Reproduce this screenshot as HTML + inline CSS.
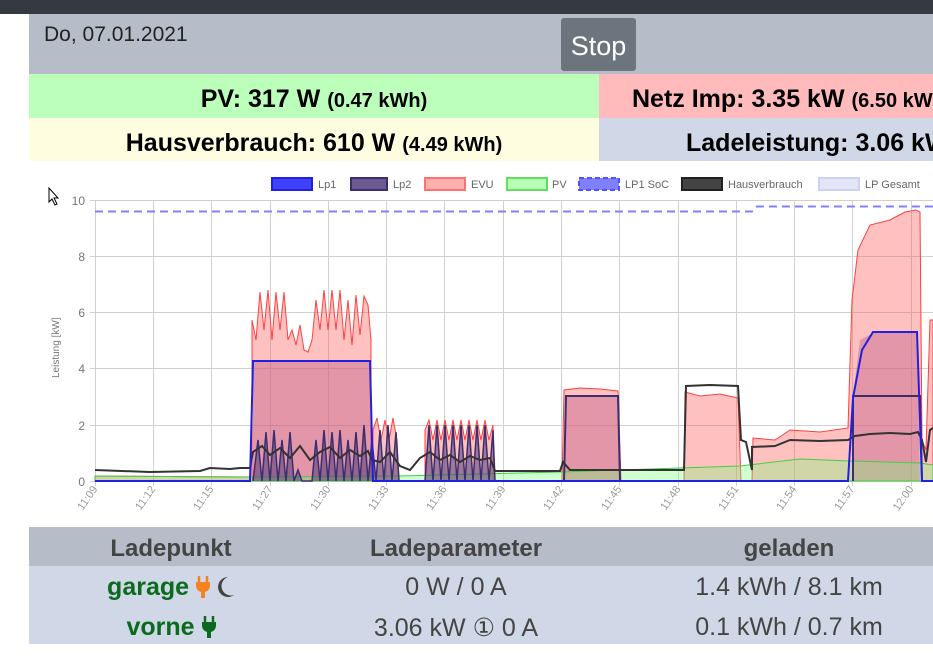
<!DOCTYPE html>
<html><head><meta charset="utf-8"><style>
body{margin:0;width:933px;height:658px;overflow:hidden;background:#fff;font-family:"Liberation Sans",sans-serif;position:relative}
.a{position:absolute}
.top{left:0;top:0;width:933px;height:14px;background:#343a40}
.hdr{left:29px;top:14px;width:904px;height:60px;background:#b7bcc9}
.date{left:44px;top:23px;font-size:21px;color:#222}
.stop{left:561px;top:18px;width:75px;height:53px;background:#6c757d;border-radius:3px;color:#fff;font-size:27px;text-align:center;line-height:56px}
.cell{height:44px;font-weight:bold;font-size:25px;line-height:50px;color:#000;white-space:nowrap;overflow:hidden}
.cell small{font-size:20px}
.th{font-weight:bold;font-size:24px;color:#444;text-align:center;width:300px}
.td{font-size:25px;color:#444;text-align:center;width:300px;white-space:nowrap}
.g{color:#0a6b1e;font-weight:bold}
</style></head><body>
<div class="a top"></div>
<div class="a hdr"></div>
<div class="a date">Do, 07.01.2021</div>
<div class="a stop">Stop</div>
<div class="a cell" style="left:29px;top:74px;width:570px;text-align:center;background:#bbffbb">PV: 317 W <small>(0.47 kWh)</small></div>
<div class="a cell" style="left:599px;top:74px;width:301px;padding-left:33px;background:#ffbbbb">Netz Imp: 3.35 kW <small>(6.50 kWh)</small></div>
<div class="a cell" style="left:29px;top:118px;width:570px;height:43px;text-align:center;background:#fffde0">Hausverbrauch: 610 W <small>(4.49 kWh)</small></div>
<div class="a cell" style="left:599px;top:118px;width:247px;padding-left:87px;height:43px;background:#d0d7e6">Ladeleistung: 3.06 kW</div>

<svg class="a" style="left:0;top:0" width="933" height="525" font-family="Liberation Sans, sans-serif">
<g font-size="11" fill="#666">
<rect x="272" y="178" width="40" height="12" fill="#4040ff" stroke="#2020e0" stroke-width="2"/><text x="318" y="188">Lp1</text>
<rect x="351" y="178" width="36" height="12" fill="#6a5a90" stroke="#3a2e70" stroke-width="2"/><text x="393" y="188">Lp2</text>
<rect x="425" y="178" width="40" height="12" fill="#ffb0b0" stroke="#ff7070" stroke-width="2"/><text x="471" y="188">EVU</text>
<rect x="507" y="178" width="40" height="12" fill="#b8ffb8" stroke="#60e060" stroke-width="2"/><text x="552" y="188">PV</text>
<rect x="579" y="178" width="40" height="12" fill="#8080ff" stroke="#5050ff" stroke-width="2" stroke-dasharray="5,3"/><text x="625" y="188">LP1 SoC</text>
<rect x="682" y="178" width="40" height="12" fill="#444" stroke="#222" stroke-width="2"/><text x="728" y="188">Hausverbrauch</text>
<rect x="819" y="178" width="40" height="12" fill="#e4e4f8" stroke="#d0d0f0" stroke-width="2"/><text x="865" y="188">LP Gesamt</text>
</g>
<g stroke="#d0d0d0" stroke-width="1">
<line x1="90" y1="200.5" x2="933" y2="200.5"/><line x1="90" y1="256.5" x2="933" y2="256.5"/><line x1="90" y1="312.5" x2="933" y2="312.5"/><line x1="90" y1="368.5" x2="933" y2="368.5"/><line x1="90" y1="425.5" x2="933" y2="425.5"/><line x1="90" y1="481.5" x2="933" y2="481.5"/>
<line x1="95.5" y1="200" x2="95.5" y2="486"/><line x1="153.5" y1="200" x2="153.5" y2="486"/><line x1="211.5" y1="200" x2="211.5" y2="486"/><line x1="270.5" y1="200" x2="270.5" y2="486"/><line x1="328.5" y1="200" x2="328.5" y2="486"/><line x1="386.5" y1="200" x2="386.5" y2="486"/><line x1="444.5" y1="200" x2="444.5" y2="486"/><line x1="503.5" y1="200" x2="503.5" y2="486"/><line x1="561.5" y1="200" x2="561.5" y2="486"/><line x1="619.5" y1="200" x2="619.5" y2="486"/><line x1="678.5" y1="200" x2="678.5" y2="486"/><line x1="736.5" y1="200" x2="736.5" y2="486"/><line x1="794.5" y1="200" x2="794.5" y2="486"/><line x1="852.5" y1="200" x2="852.5" y2="486"/><line x1="911.5" y1="200" x2="911.5" y2="486"/>
</g>
<g font-size="12" fill="#777" text-anchor="end">
<text x="85" y="205">10</text><text x="85" y="261">8</text><text x="85" y="317">6</text><text x="85" y="373">4</text><text x="85" y="430">2</text><text x="85" y="486">0</text>
</g>
<text transform="translate(59,378) rotate(-90)" font-size="10" fill="#777">Leistung [kW]</text>
<g font-size="11" fill="#999" text-anchor="end">
<text transform="translate(98,489) rotate(-55)">11:09</text><text transform="translate(156,489) rotate(-55)">11:12</text><text transform="translate(214,489) rotate(-55)">11:15</text><text transform="translate(273,489) rotate(-55)">11:27</text><text transform="translate(331,489) rotate(-55)">11:30</text><text transform="translate(389,489) rotate(-55)">11:33</text><text transform="translate(447,489) rotate(-55)">11:36</text><text transform="translate(506,489) rotate(-55)">11:39</text><text transform="translate(564,489) rotate(-55)">11:42</text><text transform="translate(622,489) rotate(-55)">11:45</text><text transform="translate(681,489) rotate(-55)">11:48</text><text transform="translate(739,489) rotate(-55)">11:51</text><text transform="translate(797,489) rotate(-55)">11:54</text><text transform="translate(855,489) rotate(-55)">11:57</text><text transform="translate(914,489) rotate(-55)">12:00</text>
</g>
<g fill="rgba(255,90,90,0.38)" stroke="#ff4040" stroke-width="1">
<path d="M95,476 L250,477 L250,481 L95,481Z"/>
<path d="M252,481 L252,320 256,340 260,292 264,330 268,290 272,340 276,292 280,330 284,292 288,340 292,330 296,345 300,325 304,350 308,352 312,340 316,300 320,330 324,290 328,330 332,290 336,330 340,290 344,340 348,300 352,345 356,295 360,335 364,296 368,305 371,340 371,481Z"/>
<path d="M373,481 L373,430 377,418 381,440 385,420 389,440 393,418 397,440 399,481Z"/>
<path d="M425,481 L425,430 429,420 433,440 437,420 441,440 445,420 449,440 453,420 457,440 461,420 465,440 469,420 473,440 477,420 481,440 485,420 489,440 493,425 494,481Z"/>
<path d="M562,481 L564,390 580,388 600,389 618,391 621,481Z"/>
<path d="M684,481 L685,392 700,396 720,394 738,398 741,481Z"/>
<path d="M752,481 L753,438 775,440 790,430 820,432 848,428 L852,300 858,250 870,225 890,220 905,212 916,210 920,212 922,440 926,450 930,320 933,320 933,481Z"/>
</g>
<g fill="rgba(190,100,140,0.45)">
<path d="M253,481 L253,361 370,361 372,481Z"/>
<path d="M564,481 L566,396 618,396 620,481Z"/>
<path d="M853,481 L853,395 860,340 875,332 917,332 920,481Z"/>
</g>
<path d="M95,476 L250,477 L400,476 L560,472 L740,466 L800,459 L850,461 L920,463 L933,465 L933,481 L95,481Z" fill="rgba(120,255,120,0.35)" stroke="#40d040" stroke-width="1"/>
<path d="M253,481 258,440 262,481 266,432 270,481 274,430 278,481 282,440 286,481 290,432 294,481 298,470 302,481 312,481 316,440 320,481 324,430 328,481 332,432 336,481 340,430 344,481 348,440 352,481 356,432 360,481 364,425 368,481 372,440 376,481 380,430 384,481 388,425 392,481 396,432 399,481 L425,481 429,425 433,481 437,425 441,481 445,425 449,481 453,425 457,481 461,425 465,481 469,425 473,481 477,425 481,481 485,425 489,481 493,430 495,481" fill="rgba(80,60,120,0.55)" stroke="#3a2e70" stroke-width="1.5"/>
<polyline points="564,481 566,396 618,396 620,481" fill="none" stroke="#3a2e70" stroke-width="2"/>
<polyline points="853,481 853,396 920,396 922,481" fill="none" stroke="#3a2e70" stroke-width="2"/>
<polyline points="95,470 150,472 200,471 210,468 230,469 240,468 250,468 253,452 262,446 270,455 280,448 290,458 300,446 310,460 320,452 330,447 340,458 350,450 360,456 368,451 372,460 380,462 390,452 400,466 410,470 420,458 430,452 440,460 450,455 460,462 470,456 480,460 490,458 495,471 560,471 563,462 570,470 620,470 684,470 686,386 710,385 738,386 741,440 746,442 752,470 752,447 775,446 790,440 820,441 848,440 855,436 870,434 890,433 910,434 918,432 922,440 926,462 930,430 933,428" fill="none" stroke="#333" stroke-width="2"/>
<polyline points="95,481 250,481 253,361 370,361 373,481 848,481 853,398 862,350 873,332 917,332 922,481 933,481" fill="none" stroke="#2020e0" stroke-width="2"/>
<polyline points="95,211.5 752,211.5 757,206.5 933,206.5" fill="none" stroke="#8080ff" stroke-width="2" stroke-dasharray="8,5"/>
<path d="M49,188 L49,202 L52,199 L55,205 L57,204 L54,198 L58,198Z" fill="#fff" stroke="#000" stroke-width="1"/>
</svg>

<div class="a" style="left:29px;top:527px;width:904px;height:39px;background:#b7bcc9"></div>
<div class="a" style="left:29px;top:566px;width:904px;height:78px;background:#d0d7e6"></div>
<div class="a th" style="left:21px;top:535px">Ladepunkt</div>
<div class="a th" style="left:306px;top:535px">Ladeparameter</div>
<div class="a th" style="left:639px;top:535px">geladen</div>
<div class="a td" style="left:21px;top:573px"><span class="g">garage</span> <svg width="14" height="22" viewBox="0 0 14 22" style="vertical-align:-3px"><path d="M3,0v6M11,0v6" stroke="#f58220" stroke-width="2.5"/><path d="M0,6h14v4a7,7 0 0 1 -5,6v6h-4v-6a7,7 0 0 1 -5,-6z" fill="#f58220"/></svg> <svg width="18" height="22" viewBox="0 0 18 22" style="vertical-align:-3px"><path d="M11,1A10,10 0 1 0 17,19A8,8 0 0 1 11,1Z" fill="#444"/></svg></div>
<div class="a td" style="left:306px;top:573px">0 W / 0 A</div>
<div class="a td" style="left:639px;top:573px">1.4 kWh / 8.1 km</div>
<div class="a td" style="left:21px;top:613px"><span class="g">vorne</span> <svg width="14" height="22" viewBox="0 0 14 22" style="vertical-align:-3px"><path d="M3,0v6M11,0v6" stroke="#0a6b1e" stroke-width="2.5"/><path d="M0,6h14v4a7,7 0 0 1 -5,6v6h-4v-6a7,7 0 0 1 -5,-6z" fill="#0a6b1e"/></svg></div>
<div class="a td" style="left:306px;top:613px">3.06 kW &#x2460; 0 A</div>
<div class="a td" style="left:639px;top:613px">0.1 kWh / 0.7 km</div>
</body></html>
